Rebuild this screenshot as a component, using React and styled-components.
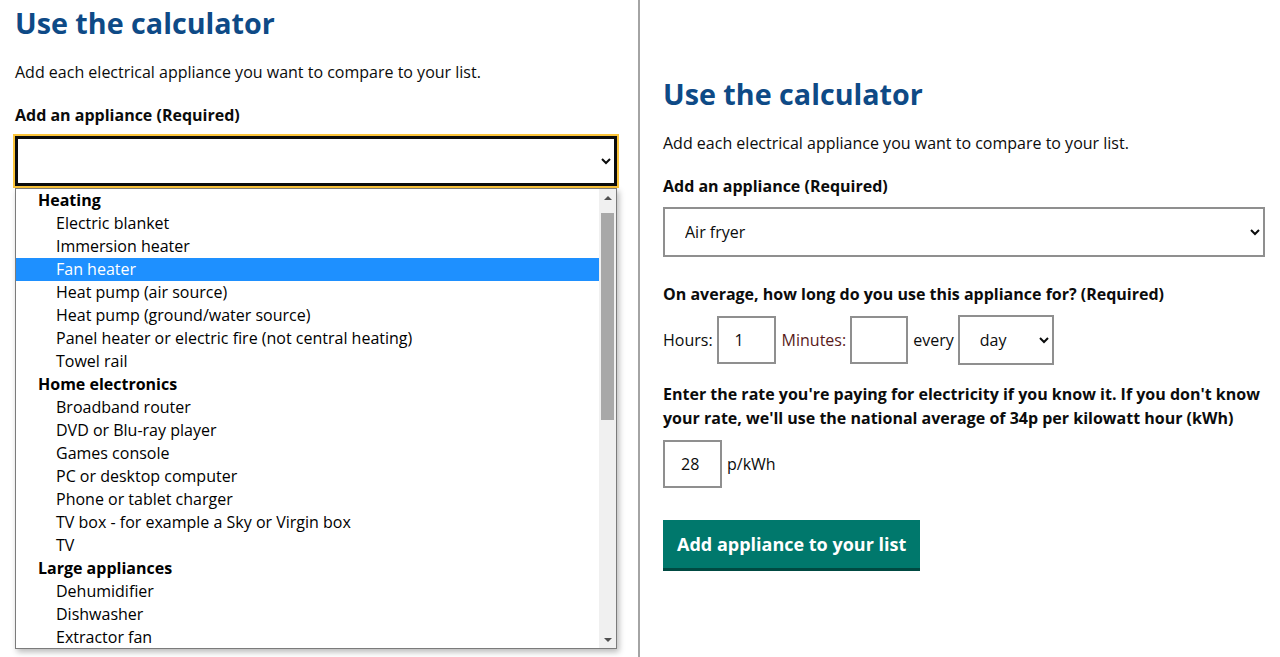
import React from 'react';
import styled, { createGlobalStyle } from 'styled-components';

const GlobalStyle = createGlobalStyle`
  html, body { margin: 0; padding: 0; background: #fff; }
  body { font-family: "Open Sans", "Noto Sans", sans-serif; color: #0b0c0c; }
  * { box-sizing: border-box; }
`;

const Page = styled.div`
  display: flex;
  width: 1280px;
  height: 657px;
  overflow: hidden;
  background: #fff;
`;

const Panel = styled.section`
  position: relative;
  flex: none;
  width: 640px;
  height: 100%;
  padding: ${(p) => p.$top}px 0 0 ${(p) => p.$left}px;
  border-right: ${(p) => (p.$divider ? '2px solid #a4a4a4' : 'none')};
`;

const Heading = styled.h2`
  margin: 0;
  font-size: 28.7px;
  line-height: 38px;
  font-weight: 700;
  color: #0e4a86;
`;

const Intro = styled.p`
  margin: 18px 0 0;
  font-size: 16px;
  line-height: 24px;
`;

const Label = styled.label`
  display: block;
  margin-top: ${(p) => p.$mt ?? 19}px;
  font-size: 16px;
  line-height: 24px;
  font-weight: 700;
  width: 602px;
`;

const SelectWrap = styled.div`
  position: relative;
  margin-top: 9px;
  width: 602px;
`;

const Select = styled.select`
  display: block;
  width: ${(p) => p.$w ?? 602}px;
  height: 50px;
  margin: 0;
  padding: 0 4px 0 16px;
  border: 2px solid #8f8f8f;
  border-radius: 0;
  background: #fff;
  color: #0b0c0c;
  font-family: inherit;
  font-size: 16px;
`;

const FocusedSelect = styled(Select)`
  border: 3px solid #0b0c0c;
  outline: 2px solid #fbc43a;
  outline-offset: 0;
`;

const Listbox = styled.div`
  position: absolute;
  top: 52px;
  left: 0;
  z-index: 5;
  display: flex;
  width: 602px;
  height: 461px;
  border: 1px solid #7b7b7b;
  background: #fff;
  box-shadow: 2px 3px 6px rgba(0, 0, 0, 0.28);
`;

const Options = styled.div`
  flex: 1;
  overflow: hidden;
`;

const Row = styled.div`
  height: 23px;
  line-height: 23px;
  padding-left: ${(p) => (p.$group ? 22 : 40)}px;
  font-size: 16px;
  font-weight: ${(p) => (p.$group ? 700 : 400)};
  white-space: nowrap;
  background: ${(p) => (p.$selected ? '#1e90ff' : 'transparent')};
  color: ${(p) => (p.$selected ? '#fff' : '#000')};
`;

const Scrollbar = styled.div`
  display: flex;
  flex-direction: column;
  align-items: center;
  width: 17px;
  background: #f0f0f0;
`;

const ArrowBtn = styled.div`
  display: flex;
  align-items: center;
  justify-content: center;
  width: 17px;
  height: 17px;
  flex: none;
  &::before {
    content: '';
    width: 0;
    height: 0;
    border-left: 4px solid transparent;
    border-right: 4px solid transparent;
    ${(p) => (p.$down ? 'border-top: 4px solid #505050;' : 'border-bottom: 4px solid #505050;')}
  }
`;

const Thumb = styled.div`
  width: 13px;
  height: 207px;
  margin-top: 7px;
  background: #a8a8a8;
`;

const Spacer = styled.div`
  flex: 1;
`;

const InlineRow = styled.div`
  display: flex;
  align-items: center;
  gap: ${(p) => p.$gap ?? 4}px;
  margin-top: 9px;
  height: 50px;
  font-size: 16px;
`;

const InlineText = styled.span`
  font-size: 16px;
  line-height: 24px;
  color: ${(p) => p.$color ?? '#0b0c0c'};
`;

const TextInput = styled.input`
  width: ${(p) => p.$w}px;
  height: 48px;
  margin: 0 ${(p) => p.$mr ?? 0}px 0 0;
  padding: 0 0 0 16px;
  border: 2px solid #8f8f8f;
  border-radius: 0;
  font-family: inherit;
  font-size: 16px;
  color: #0b0c0c;
  background: #fff;
  outline: none;
`;

const RateText = styled.p`
  margin: 17px 0 0;
  width: 600px;
  font-size: 16px;
  line-height: 24px;
  font-weight: 700;
`;

const Button = styled.button`
  display: block;
  margin-top: 31px;
  height: 48px;
  padding: 0 14px;
  border: none;
  border-radius: 0;
  background: #00786c;
  box-shadow: 0 3px 0 #004a42;
  color: #fff;
  font-family: inherit;
  font-size: 18px;
  font-weight: 700;
  cursor: pointer;
`;

const groups = [
  {
    name: 'Heating',
    items: [
      'Electric blanket',
      'Immersion heater',
      'Fan heater',
      'Heat pump (air source)',
      'Heat pump (ground/water source)',
      'Panel heater or electric fire (not central heating)',
      'Towel rail',
    ],
  },
  {
    name: 'Home electronics',
    items: [
      'Broadband router',
      'DVD or Blu-ray player',
      'Games console',
      'PC or desktop computer',
      'Phone or tablet charger',
      'TV box - for example a Sky or Virgin box',
      'TV',
    ],
  },
  {
    name: 'Large appliances',
    items: ['Dehumidifier', 'Dishwasher', 'Extractor fan'],
  },
];

export default function App() {
  return (
    <>
      <GlobalStyle />
      <Page>
        <Panel $top={4} $left={15} $divider>
          <Heading>Use the calculator</Heading>
          <Intro>Add each electrical appliance you want to compare to your list.</Intro>
          <Label>Add an appliance (Required)</Label>
          <SelectWrap>
            <FocusedSelect defaultValue="">
              <option value=""></option>
            </FocusedSelect>
            <Listbox role="listbox">
              <Options>
                {groups.map((g) => (
                  <React.Fragment key={g.name}>
                    <Row $group>{g.name}</Row>
                    {g.items.map((it) => (
                      <Row key={it} $selected={it === 'Fan heater'}>
                        {it}
                      </Row>
                    ))}
                  </React.Fragment>
                ))}
              </Options>
              <Scrollbar>
                <ArrowBtn />
                <Thumb />
                <Spacer />
                <ArrowBtn $down />
              </Scrollbar>
            </Listbox>
          </SelectWrap>
        </Panel>

        <Panel $top={75} $left={23}>
          <Heading>Use the calculator</Heading>
          <Intro>Add each electrical appliance you want to compare to your list.</Intro>
          <Label>Add an appliance (Required)</Label>
          <SelectWrap>
            <Select defaultValue="air">
              <option value="air">Air fryer</option>
            </Select>
          </SelectWrap>
          <Label $mt={25}>On average, how long do you use this appliance for? (Required)</Label>
          <InlineRow>
            <InlineText>Hours:</InlineText>
            <TextInput $w={59} $mr={2} defaultValue="1" />
            <InlineText $color="#5a1b1b">Minutes:</InlineText>
            <TextInput $w={58} $mr={1} defaultValue="" />
            <InlineText>every</InlineText>
            <Select $w={96} defaultValue="day">
              <option value="day">day</option>
              <option value="week">week</option>
            </Select>
          </InlineRow>
          <RateText>
            Enter the rate you're paying for electricity if you know it. If you don't know your rate,
            we'll use the national average of 34p per kilowatt hour (kWh)
          </RateText>
          <InlineRow $gap={5}>
            <TextInput $w={59} defaultValue="28" />
            <InlineText>p/kWh</InlineText>
          </InlineRow>
          <Button type="button">Add appliance to your list</Button>
        </Panel>
      </Page>
    </>
  );
}
